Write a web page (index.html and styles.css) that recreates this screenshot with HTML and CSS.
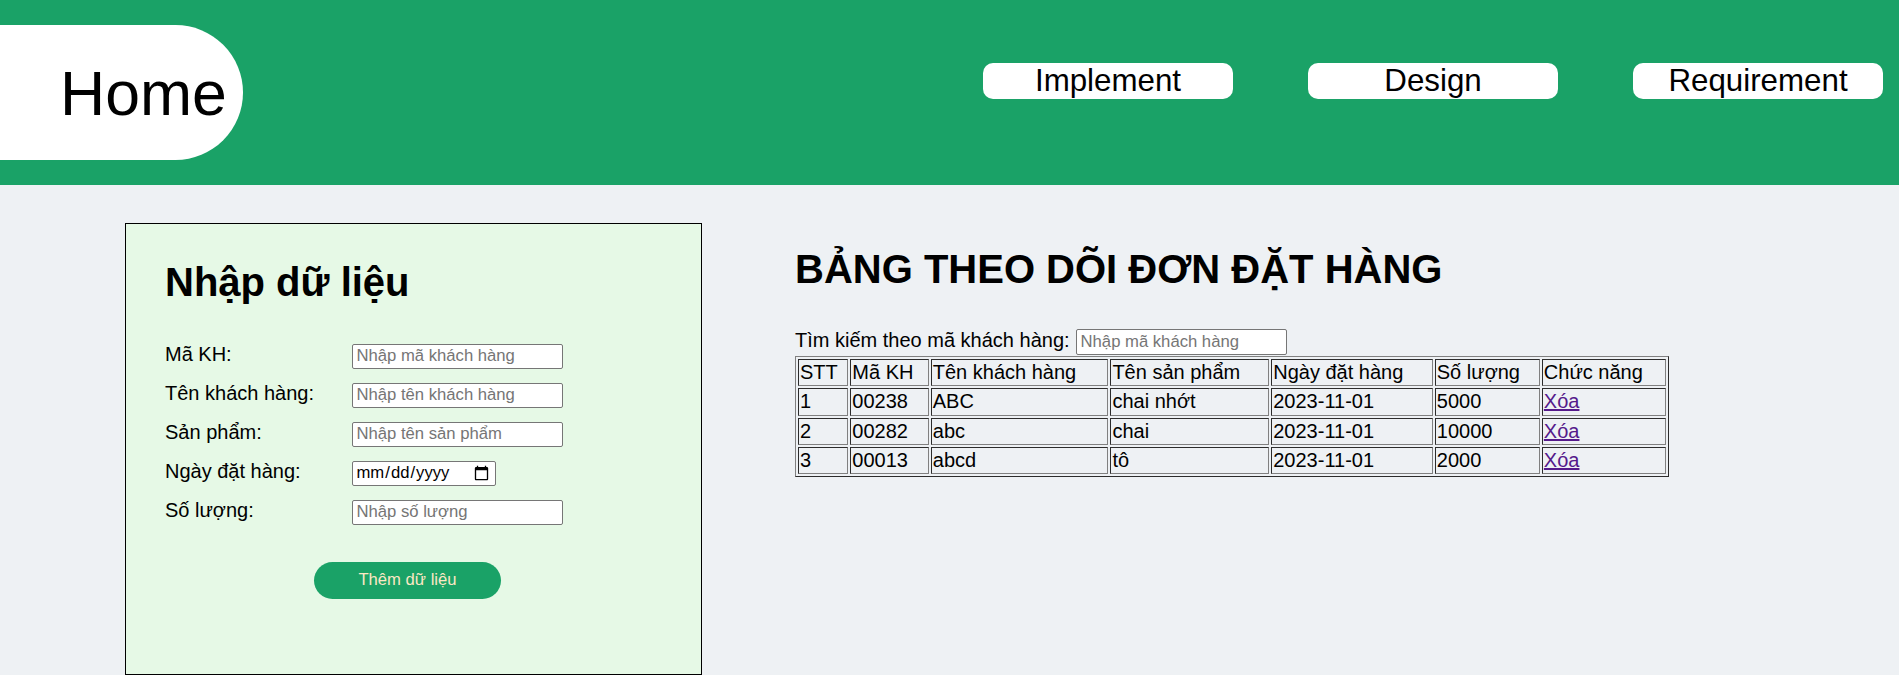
FILE: index.html
```html
<!DOCTYPE html>
<html lang="vi">
<head>
<meta charset="utf-8">
<title>Bảng theo dõi đơn đặt hàng</title>
<link rel="stylesheet" href="styles.css">
</head>
<body>
<header class="topbar">
  <div class="home">Home</div>
  <nav class="nav">
    <a class="nav-btn" href="#">Implement</a>
    <a class="nav-btn" href="#">Design</a>
    <a class="nav-btn" href="#">Requirement</a>
  </nav>
</header>
<main class="content">
  <section class="card">
    <h2 class="card-title">Nhập dữ liệu</h2>
    <div class="form-grid">
      <label class="field-label">Mã KH:</label>
      <input class="field" type="text" placeholder="Nhập mã khách hàng">
      <label class="field-label">Tên khách hàng:</label>
      <input class="field" type="text" placeholder="Nhập tên khách hàng">
      <label class="field-label">Sản phẩm:</label>
      <input class="field" type="text" placeholder="Nhập tên sản phẩm">
      <label class="field-label">Ngày đặt hàng:</label>
      <input class="field field-date" type="date">
      <label class="field-label">Số lượng:</label>
      <input class="field" type="text" placeholder="Nhập số lượng">
    </div>
    <button class="add-btn" type="button">Thêm dữ liệu</button>
  </section>
  <section class="orders">
    <h1 class="orders-title">BẢNG THEO DÕI ĐƠN ĐẶT HÀNG</h1>
    <div class="search">
      <label class="search-label">Tìm kiếm theo mã khách hàng:</label>
      <input class="field search-input" type="text" placeholder="Nhập mã khách hàng">
    </div>
    <table class="orders-table">
      <tr><td>STT</td><td>Mã KH</td><td>Tên khách hàng</td><td>Tên sản phẩm</td><td>Ngày đặt hàng</td><td>Số lượng</td><td>Chức năng</td></tr>
      <tr><td>1</td><td>00238</td><td>ABC</td><td>chai nhớt</td><td>2023-11-01</td><td>5000</td><td><a class="del" href="#">Xóa</a></td></tr>
      <tr><td>2</td><td>00282</td><td>abc</td><td>chai</td><td>2023-11-01</td><td>10000</td><td><a class="del" href="#">Xóa</a></td></tr>
      <tr><td>3</td><td>00013</td><td>abcd</td><td>tô</td><td>2023-11-01</td><td>2000</td><td><a class="del" href="#">Xóa</a></td></tr>
    </table>
  </section>
</main>
</body>
</html>
```
FILE: styles.css
```css
html, body {
  margin: 0;
  padding: 0;
}
body {
  background: #eef1f4;
  font-family: "Liberation Sans", Arial, sans-serif;
  color: #000;
  overflow: hidden;
}
.topbar {
  height: 185px;
  background: #1aa267;
  display: flex;
  justify-content: space-between;
  align-items: flex-start;
}
.home {
  margin-top: 25px;
  width: 243px;
  height: 135px;
  box-sizing: border-box;
  padding-left: 60px;
  background: #fff;
  border-radius: 0 67.5px 67.5px 0;
  display: flex;
  align-items: center;
  font-size: 62.5px;
}
.nav {
  display: flex;
  gap: 75px;
  margin-top: 63px;
  margin-right: 16px;
}
.nav-btn {
  width: 250px;
  height: 36px;
  background: #fff;
  border-radius: 10px;
  display: flex;
  align-items: center;
  justify-content: center;
  font-size: 31.3px;
  color: #000;
  text-decoration: none;
}
.content {
  display: flex;
  align-items: flex-start;
  gap: 93px;
  padding: 38px 0 0 125px;
}
.card {
  width: 577px;
  height: 452px;
  box-sizing: border-box;
  border: 1px solid #000;
  background: #e6f9e6;
  padding: 36px 40px 0 39px;
}
.card-title {
  margin: 0 0 38px 0;
  font-size: 40px;
  font-weight: bold;
  line-height: normal;
}
.form-grid {
  display: grid;
  grid-template-columns: 186.5px auto;
  row-gap: 13.5px;
  align-items: baseline;
  justify-items: start;
}
.field-label {
  font-size: 20px;
}
.field {
  width: 211px;
  height: 25px;
  box-sizing: border-box;
  border: 1px solid #767676;
  border-radius: 2px;
  padding: 0 4px;
  background: #fff;
  font-family: "Liberation Sans", Arial, sans-serif;
  font-size: 16.67px;
  color: #000;
  margin: 0;
}
.field::placeholder {
  color: #757575;
}
.field-date {
  width: 144px;
  padding: 0 3px;
}
.add-btn {
  display: block;
  margin: 37px 0 0 149px;
  width: 187px;
  height: 37px;
  border: none;
  border-radius: 18.5px;
  background: #1aa267;
  color: #fbe8c4;
  font-family: "Liberation Sans", Arial, sans-serif;
  font-size: 16.67px;
  padding: 0;
}
.orders-title {
  margin: 24px 0 37px 0;
  font-size: 40px;
  font-weight: bold;
  line-height: normal;
}
.search {
  display: flex;
  align-items: baseline;
  gap: 6px;
}
.search-label {
  font-size: 20px;
}
.search-input {
  height: 26px;
}
.orders-table {
  margin-top: 1px;
  width: 874px;
  border: 1px outset grey;
  border-spacing: 2px;
  font-size: 20px;
}
.orders-table td {
  border: 1px inset grey;
  padding: 1px;
  text-align: left;
  line-height: 23.3px;
}
.del {
  color: #551a8b;
  text-decoration: underline;
}
```
